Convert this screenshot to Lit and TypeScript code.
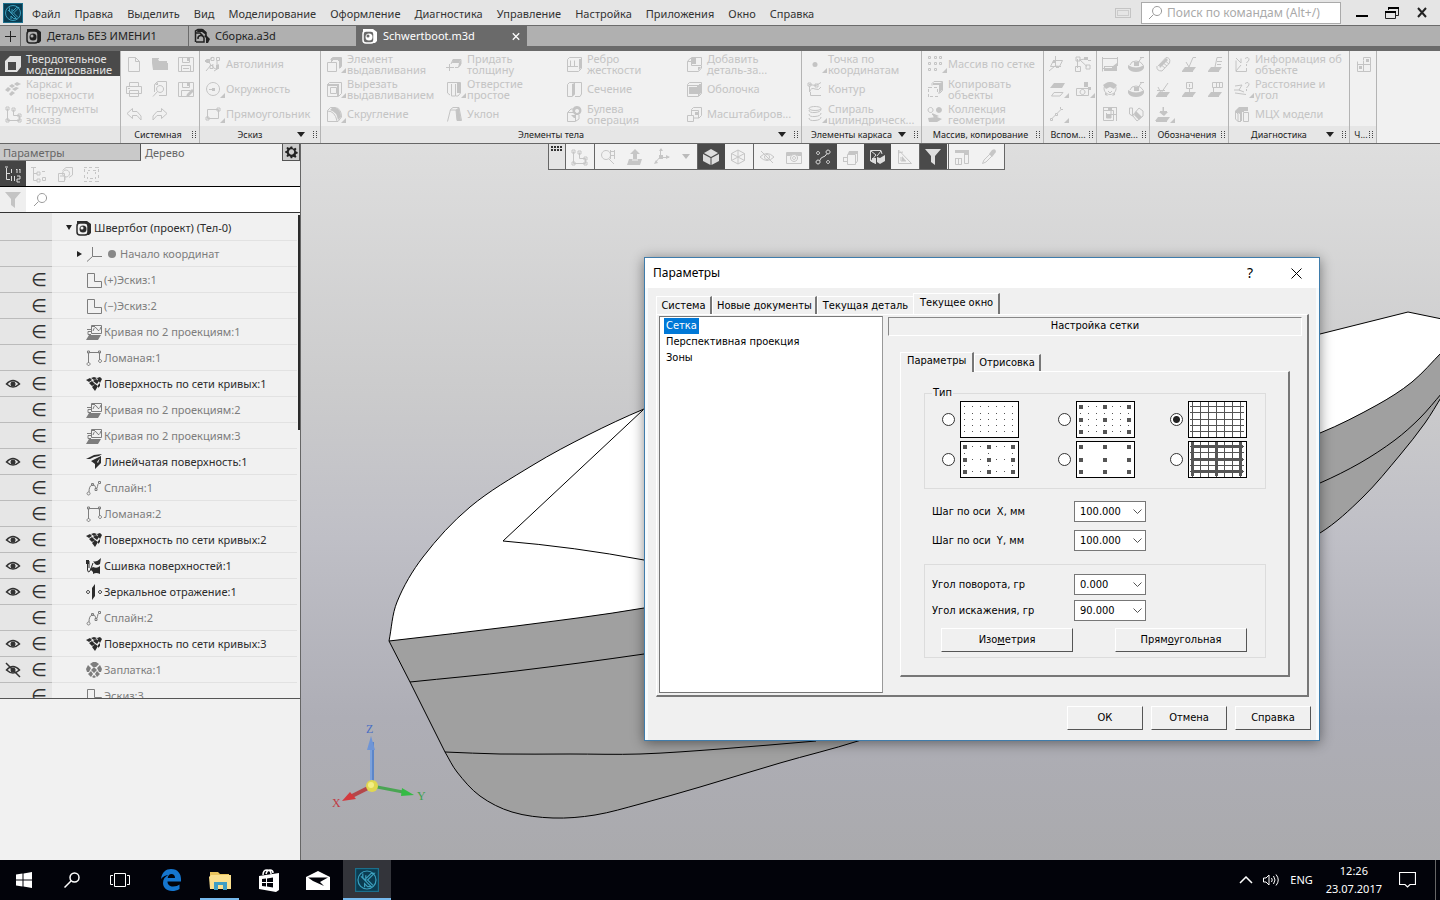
import { LitElement, html, svg, css, nothing } from "lit";
import { customElement, state } from "lit/decorators.js";
import { classMap } from "lit/directives/class-map.js";

/** Each glyph is [stroked path, filled path] on a 16 x 16 grid. */
const glyphs: Record<string, [string, string]> = {
  solid: ["", "M0 5L5 0H16V11L12 16H0ZM3 6V14H11V6Z"],
  surf: ["", "M4 5l3-2 3 2-3 2zM9 3l3-2 4 2-4 2zM0 9l3-3 3 2-3 3zM7 8l4-2 3 1-4 3zM4 13l3-3 3 2-4 3z"],
  sketchTools: ["M2.500 2.500V14.500H14.500V9.500H8.500V3.500M1 1h3v3H1zM1 13h3v3H1zM7 2h3v3H7zM13 8h3v3h-3zM13 13h3v3h-3z", ""],
  file: ["M2.500 1.500H9.500L13.500 5.500V15.500H2.500ZM9.500 1.500V5.500H13.500", ""],
  folder: ["M0 2.500H7", "M0 3h6l1 2h8v2H0zM0 7h16v7H1z"],
  save: ["M.5 1.500H15.500V15.500H.5ZM4.500 1.500V6.500H11.500V1.500M3.500 15.500V9.500H12.500V15.500M5 12.500h6", "M9 2h2v3H9z"],
  print: ["M3.500 5.500V1.500H12.500V5.500M.5 5.500H15.500V12.500H.5ZM3.500 9.500H12.500V15.500H3.500Z", "M2 7h2v1H2z"],
  preview: ["M2.500 11V3.500L5.500 .5H14.500V14.500H7M8 4.500a3.500 3.500 0 1 0 .1 0M5.500 10.500l-4.500 5", "M3 4l3-3v3z"],
  saveAs: ["M.5 1.500H15.500V15.500H.5ZM4.500 1.500V6.500H11.500V1.500M3.500 15.500V9.500H12.500", "M9 2h2v3H9zM8 16l1-3 5-5 2 2-5 5z"],
  undo: ["M6.500 2.500L1 7.500L6.500 12.500V9.500H11L15 14V10L11 5.500H6.500Z", ""],
  redo: ["M9.500 2.500L15 7.500L9.500 12.500V9.500H5L1 14V10L5 5.500H9.500Z", ""],
  autoline: ["M1 15L6 9L3 5L8 1M1.500 3.500h3v3h-3zM11.500 1.500h3v3h-3zM8 8a3 3 0 1 0 5 0M6 1.500h3v3H6zM5 9.500h3v3H5zM12 5v4M9 15l5-3", "M0 4h3v2H0zM11 9h3v4h-3z"],
  circle: ["M8 1.500a6.500 6.500 0 1 0 .1 0M4 8.500H9", "M7 7h3v3H7z"],
  rect: ["M2.500 3.500H13.500V12.500H2.500ZM12 2h3v3h-3zM1 11h3v3H1z", ""],
  extrude: ["M4.500 3.500L6.500 1.500H15.500V10.500L13.500 12.500M1.500 6.500H10.500V15.500H1.500ZM5.500 4V6", "M5 2h10v2H7v1H5zM12 4h3v8h-2V5h-1z"],
  cut: ["M1.500 3.500L3.500 1.500H15.500V12.500L12.500 15.500H1.500ZM4.500 6.500H10.500V12.500H4.500Z", "M1 3h12v12h-2V5H1z"],
  fillet: ["M1.500 15.500V4.500L4.500 1.500H9Q15.500 2.500 15.500 11L12 15.500H1.500M1.500 5Q9 5 11 15", "M6 2h4q5 2 5 9l-3 3Q11 6 4 4z"],
  thick: ["M0 11.500H8M3.500 8V15M5 8L7 3.500H15V8L12 11.500H9", "M7 3h8l-2 4H6zM13 7l2-3v5l-3 3z"],
  hole: ["M1.500 1.500H14.500V12L12 15H10M1.500 1.500V12L4 14M5.500 3V15H9.500V3", "M11 2h3v10h-3z"],
  draft: ["M1.500 15.500L4.500 3.500L7 1.500H13L15.500 14.500H11L10 4H4M10 4L13 2", "M10 4l3-2 2 12h-4z"],
  rib: ["M1.500 3.500L3.500 1.500H15.500V12.500L12.500 15.500H1.500ZM4.500 10.500V4.500M8.500 10.500V4.500M1.500 10.500H12", "M13 3h2v9l-2 2z"],
  section: ["M1.500 3.500L3.500 1.500H15.500V13L14 15.500H9M1.500 3.500V15.500H6L8.500 13V1.500M6.500 4V15", "M6 3l3-1v11l-3 3z"],
  bool: ["M1.500 6.500H9.500V15.500H1.500ZM2 6l3-3h2M10 15l3-2V9", "M11 0a4.500 4.500 0 1 1-.1 0zM11 3a2 2 0 1 0 .1 0zM5 9h5v3H8z"],
  addPart: ["M1.500 5.500H6M1.500 5.500V15.500H12.500L15.500 12V10M1.500 5.500L4 2.500H6M5.500 1.500H15.500V9.500H5.500Z", "M6 2h4v6H6zM12 11h3l-3 4z"],
  shell: ["M1.500 3.500L3.500 1.500H15.500V12.500L12.500 15.500H1.500ZM5.500 7.500H9.500V11.500H5.500Z", "M1 4h12v11h-1V13H3V6h8V5H1zM13 3h2v9l-2 2z"],
  scale: ["M1.500 9.500H7.500V15.500H1.500ZM5.500 9V3.500L7.500 1.500H15.500V9.500L13 12H8M5.500 4.500H12.500V12", "M9 6h3v3H9z"],
  point: ["", "M8 6a2.500 2.500 0 1 1 0 5a2.500 2.500 0 1 1 0-5z"],
  contour: ["M2 3.500L9 4.500L14 1.500M2.500 5V11Q4 6 8 8T14 6M3.500 11V14.500H14M1 2h3v3H1zM8 3h3v3H8z", ""],
  spiral: ["M8 .5a6 2 0 1 0 .1 0M2 4Q2 7 8 6.500T14 3M2 8Q2 11 8 10.500T14 7M2 12Q2 15 8 14.500T14 11", ""],
  array: ["M1.500 .5h2v2h-2zM7.500 .5h2v2h-2zM12.500 .5h2v2h-2zM1.500 6.500h2v2h-2zM7.500 6.500h2v2h-2zM12.500 6.500h2v2h-2zM1.500 12.500h2v2h-2zM7.500 12.500h2v2h-2z", ""],
  copy: ["M5 4.500V2.500L7 .5H15.500V9.500L13 12H11", "M6 2h7l2-1v8l-3 3V4H6zM1 6h4v1H1zM7 6h3v1H7zM1 8h1v3H1zM10 8h1v3h-1zM1 13h1v3H1zM3 15h3v1H3zM8 15h3v1H8z"],
  collect: ["M3.500 1.500a2.500 2.500 0 1 0 .1 0M5 8L8 11L4 14", "M12 1a3 3 0 1 1-.1 0zM5 7l7 3-5 2zM1 12l9-1 5 2-5 3H2z"],
  plane: ["M4.500 4.500H13.500L10.500 10.500H1.500ZM6.500 0V10M0 15L6 10L12 10.500", "M4 4h3v3H4zM7 10h3v2H7z"],
  csys: ["M5 4L12 10.500M2.500 3V12M.5 10.500H5.500V15.500H.5ZM4 4L10 3M1 1h4v4H1zM11 9h4v4h-4z", "M9 1h4v3H9zM13 4h3v1h-3z"],
  planes2: ["M2.500 15L5 11.500H14L11 15Z", "M1 7l4-5h11l-3 5z"],
  cam: ["M1.500 7.500H13.500V14.500H1.500ZM7.500 8.500a2.500 2.500 0 1 0 .1 0", "M9 1h4v5H9zM13 6h3v3h-3z"],
  line2: ["M1.500 12.500h2v2h-2zM6.500 7.500h2v2h-2zM3.500 12l3-3M8.500 7l3-3M11.500 3.500V1M12 3.500h2", ""],
  dim1: ["M.5 1V15.500M15.500 1V10M1 2.500H15M1 12.500H15", "M2 10h9l4-3v8H2zM3 11v1h7v-1z"],
  dimR: ["M2 9Q3 5 8 5T15 9M9 8L14 1M12 1.500H16", "M0 9q8 5 16 0v3q-2 4-8 4T0 12zM6 6h5v4H6z"],
  face: ["M8 1.500a6 6 0 1 0 .1 0M3 5h10M6 10l2 2 2-2", "M1 4q7-6 14 0l-3 4-4-2-4 2zM3 11l3 4-3-1zM13 11l-3 4 3-1z"],
  dim2: ["M1.500 1V14.500H11.500V4.500H1M4.500 8.500H15M4.500 7V12H9V5M14.500 1V15M1 1.500H14", "M5 9h4v3H5zM6 2h4v2H6z"],
  tag: ["M1.500 2L4.500 2L4.500 10L1.500 8ZM5 9L11 2L15 5V10L9 15L5 10Z", "M8 5l6 6-3 3-5-5z"],
  thread: ["M3 10L11 1.500Q16 1.500 14.500 7L7 15Q1 15 2 10M5 8l5 4M7 6l5 4M9 4l5 4", "M4 9l7-7 2 2-8 8z"],
  rough: ["M5 6L8 11L12 1.500H15M1 15.500H12", "M4 11h11l-3 4H1z"],
  base: ["M8 11L10 1.500H15M10 5.500h5M10 8.500h4M1 15.500H12", "M4 11h11l-3 4H1z"],
  leader: ["M3 6L6 12L13 2M2 9.500H10M1 15.500H12", "M4 11h11l-3 4H1z"],
  datum: ["M5.500 1.500H11.500V7.500H5.500ZM8.500 8V11M1 15.500H12", "M4 11h11l-3 4H1zM8 3h1v3H8z"],
  tol: ["M5.500 1.500H15.500V6.500H5.500ZM9.500 2V6M12.500 2V6M6.500 7V12M1 15.500H12", "M4 11h11l-3 4H1z"],
  weld: ["M8.500 1V9M8 1L8 9M1 15.500H12M5 5.500h7", "M4 6h9l-4 4zM3 11h12l-3 4H0z"],
  info: ["M2 2L7 7V2.500M2 4.500V15.500H12.500V12M11 2.500Q15 0 15 4L12.500 7M12.500 8v2M7 9l-5 6", ""],
  distance: ["M1 5L8 4L5 9L10 11M1 12L12 13.500M11 2.500Q15 0 15 4L12.500 7M12.500 8v2M0 9h6", ""],
  mass: ["M1.500 5.500V13L4 15.500V8ZM4 15.500H7M9.500 6.500H14.500V15.500H9.500Z", "M1 5l4-4h9v4h-4v1H8V15H6V8L1 6z"],
  more: ["M2.500 5.500V15.500H15.500V8.500H2M8.500 5V15M8.500 4.500V1.500H15.500V11", "M4 10h3v3H4zM11 3h3v3h-3z"],
  zoomArea: ["M6 1.500a4.500 4.500 0 1 0 .1 0M9 10l5 5M10 2.500h5M11 6.500h4M10.500 1v9M14.500 1v9", ""],
  orient: ["M8 1V10M5 11H11", "M8 0l5 5h-3v5H6V5H3zM2 10h3v2h6v-2h4l-2 6H0z"],
  axes: ["M6.500 7V0M6.500 8.500H15M6 8L1 14", "M5 6h4v4H5zM12 6l4 2-4 2zM0 15l2-4 2 3zM5 2l2-3 2 3z"],
  cube: ["", "M8 0L15 4L8 8L1 4ZM0 5L7.500 9V16L0 12ZM8.500 9L16 5V12L8.500 16Z"],
  wire: ["M8 1L14.500 4.500V11.500L8 15L1.500 11.500V4.500ZM1.500 4.500L8 8L14.500 4.500M8 8V15M8 1V8L1.500 11.500M8 8L14.500 11.500", ""],
  eyeOff: ["M1 8Q8 1 15 8Q8 15 1 8ZM2 2L14 14M8 5.500a2.500 2.500 0 1 0 .1 0", ""],
  camera: ["M.5 3.500H15.500V14.500H.5ZM8 5.500a3.500 3.500 0 1 0 .1 0M8 7.500a1.500 1.500 0 1 0 .1 0", "M1 4h14v3h-3L8 5 4 7H1z"],
  spline4: ["M3 2.500a1.500 1.500 0 1 0 .1 0M3 11a2 2 0 1 0 .1 0M13 1a2 2 0 1 0 .1 0M13 11.500a1.500 1.500 0 1 0 .1 0M4.500 12Q6 8 8 8T12 4.500", ""],
  boxes: ["M5.500 5.500H13.500V15.500H5.500ZM6 5L8 2.500H15.500V12L14 14M1 8.500H5M1 12.500H5M1.500 8v5", "M7 2h9v3H6z"],
  display: ["M1.500 1.500H12L13 5M1.500 1.500V12L7 14.500M2 2l5 4-5 6M8 7l4-5", "M8 8l3 1 5-3v6l-5 3-3-2zM3 9h4v6l-4-2z"],
  triang: ["M2.500 1V14.500H15.500ZM2 4l5-1M5 8v4h5", "M6 7l4 5H6z"],
  filter: ["", "M0 0H16L10 7V16L6 13V7Z"],
  caliper: ["M1.500 2.500H14.500M10.500 2V14.500H14.500V2M1 9.500H7M1.500 9V15.500H7.500V9M4.500 9v6", "M1 1h14v3H1zM10 4h4v2h-4z"],
  dropper: ["M1.500 14.500L3 11L9 5L11 7L5 13Z", "M8 5l3-4q4-2 4 2l-4 5z"],
  treeNum: ["M1.500 2V13.500H5M1.500 7.500H5M0 1h3M6.500 3V7M6.500 10v5M9.500 10v5M11 4l1-1v4M14 4l1-1v4M12 10h3v3h-3v3h3", ""],
  tree: ["M2.500 1V14.500H6M3 7.500H6M6 6h3v3H6zM6 13h3v3H6zM11 5.500h3M11.500 11.500h3v3h-3zM0 1.500h5", ""],
  asmCopy: ["M5.500 4.500L9 1.500H15.500V9L12 11.500M1.500 7.500H7.500V15.500H1.500ZM9 4a3.500 3.500 0 1 0 .1 0M3 10h5v4", ""],
  dashed: ["M1 1.500h3M6 1.500h3M12 1.500h4M1 15.500h3M6 15.500h3M12 15.500h4M1.500 3v3M1.500 9v3M15.500 3v3M15.500 9v3M5 4.500h2M10 4.500h3M4.500 6v2M4.500 11v2M12.500 6v2M12.500 11v2M7 12.500h3", ""],
  searchL: ["M10 1.500a4.500 4.500 0 1 0 .1 0M6.500 9.500L2 14", ""],
  origin: ["M6.500 1V10.500H16M6.500 10.500L1 15.500", ""],
  sketch: ["M1.500 1.500H8.500V9.500H15.500V15.500H1.500Z", ""],
  curve2: ["M5.500 1.500H15.500V9.500H5.500ZM7 7q2-6 4-2t4-2M1 5.500h4M5 7.500H2v3h3M3 12H13", "M3 11h12l-3 5H0zM6 1h3v2H6z"],
  poly: ["M2.500 3V13M2.500 2.500H13.500V10M1.500 1h2v2h-2zM12.500 1h2v2h-2zM2.500 12.500a1.500 1.500 0 1 0 .1 0M14 9.500a1.500 1.500 0 1 0 .1 0", ""],
  mesh: ["", "M0 4l4-2 2 2-3 2zM5 2l3-1 3 1-3 2zM7 5l3-2 3 2-2 3zM11 2l3-1 2 2-2 4-2-3zM3 7l3-2 3 3-3 2zM6 11l3-3 3 2-3 5zM12 9l2-2v3l-2 2z"],
  ruled: ["", "M0 5L8 1L16 0L13 2L8 3L4 5ZM5 7L15 2V9L9 15V10ZM11 8l3-4-2 5z"],
  spline: ["M2.500 12a1.500 1.500 0 1 0 .1 0M3 12Q3 6 6 5T10 8Q11 10 12 4M5.500 3.500h2v2h-2zM9 8.500h2v2H9zM12.500 1.500h2v2h-2z", ""],
  sew: ["M1.500 2.500V12Q2 15.500 4 13L7 5M3 3V10", "M0 2h3v4H0zM7 3q3 2 8-3l-1 6q-3 2-5 0zM7 9q4 2 7-1v8q-4-2-7 0zM4 11l3-2v5z"],
  mirror: ["M2 6.500a1.500 1.500 0 1 0 .1 0M14 6.500a1.500 1.500 0 1 0 .1 0", "M6 4L9 0V12L6 16Z"],
  patch: ["", "M4 2l3-2h3l3 2-3 3H7zM0 7l2-4 3 3-2 4H1zM16 7l-2-4-3 3 2 4h2zM5 8l3-3 3 3-3 3zM2 12l3-3 2 3-2 3zM14 12l-3-3-2 3 2 3zM6 15l2-2 2 2-2 1z"],
  gear: ["", "M7 1h2l.5 2 1.500.700 2-1.200 1.500 1.500-1.200 2 .700 1.500 2 .500v2l-2 .500-.700 1.500 1.200 2-1.500 1.500-2-1.200L9.500 14 9 16H7l-.5-2L5 13.300l-2 1.200L1.500 13l1.200-2L2 9.500 0 9V7l2-.5L2.700 5 1.500 3 3 1.500l2 1.200L6.500 2zM8 4.500a3.500 3.500 0 1 0 .1 0z"],
};

const icon = (name: string, corner = false) => {
  const [line, area] = glyphs[name];
  return html`<svg class="ic" viewBox="0 -1 20 18" aria-hidden="true">
    ${line ? svg`<path d=${line} fill="none" stroke="currentColor" />` : nothing}
    ${area ? svg`<path d=${area} fill="currentColor" fill-rule="evenodd" />` : nothing}
    ${corner ? svg`<path d="M20 12V17H15Z" fill="currentColor" />` : nothing}
  </svg>`;
};

const partIcon = html`<svg class="part" viewBox="0 0 16 16" aria-hidden="true">
  <path d="M1 1H11L15 4V13L13 15H4L1 12Z" fill="currentColor" />
  <rect class="part-in" x="1" y="3" width="11" height="12" rx="3" stroke="currentColor" stroke-width="1.500" />
  <circle cx="7" cy="9" r="3.500" fill="currentColor" /><circle class="part-in" cx="6" cy="8" r="1.500" />
</svg>`;
const asmIcon = html`<svg class="part" viewBox="0 0 16 16" aria-hidden="true">
  <path d="M1.500 14V3L4 1.500H8L12 4.500V8M1.500 5H6L9 8M2 14H7M4 11a3 3 0 0 1 6-1V14H6" fill="none" stroke="currentColor" stroke-width="1.500" />
  <path d="M10 8L12 7L16 11L14 15H12V10ZM4 1h5l3 3v3L8 4H3z" fill="currentColor" />
</svg>`;
const logo = html`<svg class="logo" viewBox="0 0 20 20" aria-hidden="true">
  <rect class="logo-bg" x=".5" y=".5" width="19" height="19" />
  <g class="logo-line"><circle cx="10" cy="10" r="7.500" /><path d="M6.500 4.500V8L9 10.500V6M5 7L13.500 15.500H10.500L8 13V16M9.500 8.500L13.500 4.500H16L10.500 10L15 14.500" /></g>
</svg>`;
const grip = html`<svg class="grip" viewBox="0 0 4 8" aria-hidden="true"><path d="M0 .5H4M0 2.500H4M0 4.500H4M0 6.500H4" stroke="#444" stroke-dasharray="1 2" /></svg>`;

type Tool = { icon: string; text?: string; more?: boolean; on?: boolean };
type Group = { name: string; size: string; menu?: boolean; wide: boolean; tools: (Tool | null)[] };
const t = (icon: string, text?: string, more = false): Tool => ({ icon, text, more });

const groups: Group[] = [
  { name: "", size: "g-modes", wide: true, tools: [{ icon: "solid", text: "Твердотельное\nмоделирование", on: true }, t("surf", "Каркас и\nповерхности"), t("sketchTools", "Инструменты\nэскиза")] },
  { name: "Системная", size: "g-sys", wide: false, tools: [t("file"), t("print"), t("undo"), t("folder"), t("preview"), t("redo"), t("save"), t("saveAs")] },
  { name: "Эскиз", size: "g-sketch", menu: true, wide: true, tools: [t("autoline", "Автолиния"), t("circle", "Окружность", true), t("rect", "Прямоугольник", true)] },
  { name: "Элементы тела", size: "g-body", menu: true, wide: true, tools: [
    t("extrude", "Элемент\nвыдавливания", true), t("cut", "Вырезать\nвыдавливанием", true), t("fillet", "Скругление", true),
    t("thick", "Придать\nтолщину"), t("hole", "Отверстие\nпростое", true), t("draft", "Уклон"),
    t("rib", "Ребро\nжесткости"), t("section", "Сечение"), t("bool", "Булева\nоперация"),
    t("addPart", "Добавить\nдеталь-за..."), t("shell", "Оболочка"), t("scale", "Масштабиров...")] },
  { name: "Элементы каркаса", size: "g-frame", menu: true, wide: true, tools: [t("point", "Точка по\nкоординатам", true), t("contour", "Контур"), t("spiral", "Спираль\nцилиндрическ...", true)] },
  { name: "Массив, копирование", size: "g-array", wide: true, tools: [t("array", "Массив по сетке", true), t("copy", "Копировать\nобъекты"), t("collect", "Коллекция\nгеометрии")] },
  { name: "Вспом...", size: "g-two", wide: false, tools: [t("plane"), t("planes2", undefined, true), t("line2", undefined, true), t("csys"), t("cam", undefined, true)] },
  { name: "Разме...", size: "g-two", wide: false, tools: [t("dim1"), t("face"), t("dim2"), t("dimR"), t("dimR"), t("tag")] },
  { name: "Обозначения", size: "g-sys", wide: false, tools: [t("thread"), t("leader"), t("weld", undefined, true), t("rough"), t("datum"), null, t("base"), t("tol")] },
  { name: "Диагностика", size: "g-sketch", menu: true, wide: true, tools: [t("info", "Информация об\nобъекте"), t("distance", "Расстояние и\nугол", true), t("mass", "МЦХ модели")] },
  { name: "Ч...", size: "g-one", wide: false, tools: [t("more")] },
];

type Node = { icon: string; name: string; eye?: "on" | "off"; mark?: string };
const nodes: Node[] = [
  { icon: "sketch", name: "Эскиз:1", mark: "(+)" },
  { icon: "sketch", name: "Эскиз:2", mark: "(−)" },
  { icon: "curve2", name: "Кривая по 2 проекциям:1" },
  { icon: "poly", name: "Ломаная:1" },
  { icon: "mesh", name: "Поверхность по сети кривых:1", eye: "on" },
  { icon: "curve2", name: "Кривая по 2 проекциям:2" },
  { icon: "curve2", name: "Кривая по 2 проекциям:3" },
  { icon: "ruled", name: "Линейчатая поверхность:1", eye: "on" },
  { icon: "spline", name: "Сплайн:1" },
  { icon: "poly", name: "Ломаная:2" },
  { icon: "mesh", name: "Поверхность по сети кривых:2", eye: "on" },
  { icon: "sew", name: "Сшивка поверхностей:1", eye: "on" },
  { icon: "mirror", name: "Зеркальное отражение:1", eye: "on" },
  { icon: "spline", name: "Сплайн:2" },
  { icon: "mesh", name: "Поверхность по сети кривых:3", eye: "on" },
  { icon: "patch", name: "Заплатка:1", eye: "off" },
  { icon: "sketch", name: "Эскиз:3" },
];

const eye = (kind: "on" | "off") => html`<svg class="eye" viewBox="0 0 16 16" aria-hidden="true">
  <path d="M1.500 8Q8 1 14.500 8Q8 14 1.500 8Z" fill="none" stroke="currentColor" stroke-width="1.500" />
  <circle cx="8" cy="8" r="2.500" fill="currentColor" />
  ${kind === "off" ? svg`<path d="M1 1L15 15" stroke="currentColor" stroke-width="1.500" />` : nothing}
</svg>`;

/** Smooth open curve through the points; handles are a third of each segment's length. */
type P = [number, number];
const curve = (pts: P[], start = "M") => {
  const tangent = (i: number): P => {
    const a = pts[Math.max(i - 1, 0)], b = pts[Math.min(i + 1, pts.length - 1)];
    const n = Math.hypot(b[0] - a[0], b[1] - a[1]);
    return [(b[0] - a[0]) / n, (b[1] - a[1]) / n];
  };
  let d = `${start}${pts[0]}`;
  for (let i = 0; i < pts.length - 1; i++) {
    const b = pts[i], c = pts[i + 1], u = tangent(i), v = tangent(i + 1);
    const h = Math.hypot(c[0] - b[0], c[1] - b[1]) / 3;
    d += `C${b[0] + u[0] * h},${b[1] + u[1] * h} ${c[0] - v[0] * h},${c[1] - v[1] * h} ${c}`;
  }
  return d;
};
const deckEdge: P[] = [[389, 641], [397, 602], [423, 557], [470, 507], [533, 465], [588, 435], [644, 409], [700, 388]];
const sheer: P[] = [[389, 641], [516, 626], [644, 608], [900, 560], [1150, 497], [1320, 433], [1377, 405], [1412, 382], [1442, 352]];
const keel: P[] = [[445, 752], [457, 772], [480, 796], [512, 812], [553, 818], [595, 815], [640, 804], [700, 787], [780, 763], [858, 741], [1100, 660], [1320, 533], [1363, 497], [1400, 455], [1425, 423], [1442, 396]];
const chine: P[] = [[410, 682], [516, 671], [644, 654], [900, 615], [1150, 555], [1320, 483], [1360, 463], [1395, 440], [1420, 418], [1442, 393]];
const lowChine: P[] = [[445, 752], [500, 754], [570, 754], [640, 754], [720, 749], [816, 741]];
const rev = (p: P[]) => [...p].reverse();
const stern = "L1320,334L1408,312L1442,319";

const scene = html`<svg class="scene" viewBox="301 144 1139 716" preserveAspectRatio="xMinYMin slice" aria-hidden="true">
  <path class="deck" d=${curve(deckEdge) + stern + curve(rev(sheer), "L")} />
  <path class="hull" d=${curve(sheer) + curve(rev(keel), "L") + "L410,682Z"} />
  <g class="edges">
    <path d=${curve(deckEdge) + stern} /><path d=${curve(sheer)} />
    <path d=${"M389,641L410,682L445,752" + curve(keel, "L")} />
    <path d=${curve(chine)} /><path d=${curve(lowChine)} />
    <path d="M643,410L503,541Q575,547 644,560" />
  </g>
  <path d="M372 786V742" stroke="#5c86c9" stroke-width="4" /><path d="M371 786V742" stroke="#9dbdec" />
  <path d="M371 736L375 750H367Z" fill="#6f95d6" />
  <path d="M372 786L350 797" stroke="#b3474b" stroke-width="4" /><path d="M342 801L350 792L356 799Z" fill="#d3393d" />
  <path d="M372 786L403 792" stroke="#4aa553" stroke-width="3" /><path d="M414 795L402 788L401 796Z" fill="#35bb45" />
  <circle cx="372" cy="786" r="6" fill="#e0d750" /><circle cx="371" cy="785" r="3" fill="#f2ee85" />
  <text class="ax" x="366" y="733" fill="#4b6fc4">Z</text><text class="ax" x="332" y="807" fill="#c03a44">X</text><text class="ax" x="417" y="800" fill="#3da24a">Y</text>
</svg>`;

const xs = [4, 12, 20, 28, 36, 44, 52];
const ys = [5, 12, 18, 24, 30];
const dots = (keep: (i: number, j: number) => boolean) =>
  xs.flatMap((x, i) => ys.map((y, j) => (keep(i, j) ? svg`<rect x=${x} y=${y} width="1" height="1" />` : nothing)));
const blocks = [3, 27, 51].flatMap((x) => [4, 17, 29].map((y) => svg`<rect x=${x} y=${y} width="4" height="4" />`));
const gridPath = "M4.500 1V36M12.500 1V36M20.500 1V36M28.500 1V36M36.500 1V36M44.500 1V36M52.500 1V36M2 5.500H56M2 11.500H56M2 18.500H56M2 24.500H56M2 30.500H56";
const samples = [
  { id: "points", label: "Точки", art: dots(() => true) },
  { id: "points-nodes", label: "Точки с узлами", art: [dots(() => true), blocks] },
  { id: "lines", label: "Линии", art: svg`<path d=${gridPath} />` },
  { id: "sparse-nodes", label: "Редкие точки с узлами", art: [dots((i, j) => i % 3 === 0 || j % 2 === 0), blocks] },
  { id: "nodes", label: "Узлы", art: blocks },
  { id: "bold-lines", label: "Линии с утолщением", art: svg`<path d=${gridPath} /><path stroke-width="3" d="M4.500 1V35M28.500 1V35M52.500 1V35M3 5.500H55M3 18.500H55M3 30.500H55" />` },
];

@customElement("app-root")
export class AppRoot extends LitElement {
  @state() private sample = "lines";

  static styles = css`
    * { box-sizing: border-box; }
    :host { display: flex; flex-direction: column; height: 100vh; overflow: hidden; background: #f1f1f1; color: #333; font: 11px/16px "Noto Sans", "Open Sans", sans-serif; }
    button, input, select { font: inherit; color: inherit; margin: 0; padding: 0; border: 0; background: none; border-radius: 0; }
    a { color: inherit; text-decoration: none; }
    svg { display: block; flex: none; }
    .ic { width: 20px; height: 18px; overflow: visible; }
    .part { width: 16px; height: 16px; }
    .part-in { fill: #b0b0b0; }
    .logo { width: 20px; height: 20px; }
    .logo-bg { fill: #0b3c51; stroke: #1c6f8c; }
    .logo-line { fill: none; stroke: #3c9fbd; stroke-width: 1; }

    .menubar { display: flex; align-items: center; height: 26px; flex: none; padding-left: 3px; background: #e5e5e5; border-bottom: 1px solid #6b6b6b; }
    .menu { display: flex; gap: 14px; margin-left: 9px; padding-top: 2px; flex: 1; }
    .find { display: flex; align-items: center; width: 200px; height: 22px; border: 1px solid #aaa; background: #fff; color: #999; margin: 0 14px 0 10px; padding-left: 5px; font-size: 12px; }
    .find input { flex: 1; min-width: 0; outline: 0; }
    .find input::placeholder { color: #aaa; opacity: 1; }
    .frame { width: 16px; height: 10px; border: 1px solid #c4c4c4; box-shadow: inset 0 0 0 1px #e5e5e5, inset 0 0 0 2px #ccc; }
    .winbtns { display: flex; gap: 16px; padding-right: 11px; color: #222; }

    .docs { display: flex; height: 25px; flex: none; background: #b0b0b0; border-bottom: 5px solid #6a6a6a; color: #222; }
    .plus { width: 21px; border-right: 1px solid #6b6b6b; display: grid; place-items: center; }
    .doc { display: flex; align-items: center; gap: 5px; padding-left: 5px; width: 168px; border-right: 1px solid #6b6b6b; text-align: left; }
    .doc.on { width: 170px; background: #6a6a6a; color: #fff; padding-right: 3px; }
    .doc.on .part-in { fill: #6a6a6a; }
    .doc .x { margin-left: auto; width: 14px; }

    .ribbon { display: flex; flex: none; border-bottom: 1px solid #666; color: #c4c4c4; }
    .group { display: flex; flex-direction: column; border-right: 1px solid #b4b4b4; flex: none; }
    .g-modes { width: 121px; } .g-sys { width: 79px; } .g-sketch { width: 121px; } .g-body { width: 481px; } .g-frame { width: 120px; } .g-array { width: 122px; } .g-two { width: 53px; } .g-one { width: 27px; }
    .tools { display: grid; grid-template-rows: repeat(3, 25px); grid-auto-flow: column; grid-auto-columns: 26px; height: 75px; }
    .tools.wide { grid-auto-columns: 120px; }
    .tool { display: flex; align-items: center; gap: 1px; padding-left: 5px; text-align: left; line-height: 11px; white-space: pre; }
    .tool.on { background: #4a4a4a; color: #e2e2e2; }
    .cap { display: flex; align-items: center; height: 17px; background: #e6e6e6; color: #222; font-size: 9px; padding: 0 3px; white-space: nowrap; }
    .cap span { flex: 1; text-align: center; }
    .cap .tri { width: 8px; height: 5px; margin-right: 8px; fill: #222; }
    .grip { width: 4px; height: 8px; }

    .work { display: flex; flex: 1; min-height: 0; }
    .side { width: 301px; flex: none; display: flex; flex-direction: column; border-right: 1px solid #666; }
    .stabs { display: flex; height: 17px; color: #666; flex: none; }
    .stab { width: 141px; text-align: left; padding-left: 3px; background: #c9c9c9; border-right: 1px solid #555; border-bottom: 1px solid #777; line-height: 15px; }
    .stab.on { background: none; border: 0; padding-left: 4px; }
    .gearbtn { width: 18px; border: 1px solid #555; border-top: 0; margin-left: auto; background: #ccc; color: #222; display: flex; align-items: center; padding-left: 2px; }
    .gearbtn .ic { width: 16px; height: 14px; }
    .sbar { display: flex; height: 26px; flex: none; color: #c6c6c6; border-bottom: 1px solid #000; }
    .sq { width: 26px; display: flex; align-items: center; padding-left: 5px; }
    .sq.on { background: #444; color: #ddd; }
    .sfind { display: flex; height: 26px; flex: none; background: #fff; border-bottom: 1px solid #333; color: #999; }
    .sfind .sq { background: #efefef; color: #c4c4c4; }
    .sfind label { display: flex; align-items: center; padding-left: 6px; flex: 1; }
    .sfind input { flex: 1; outline: 0; }
    .tree { height: 486px; flex: 0 1 auto; overflow: hidden; padding-top: 2px; border-bottom: 1px solid #555; background: linear-gradient(#2b2b2b, #2b2b2b) 298px 2px / 3px 215px no-repeat, linear-gradient(90deg, #e6e6e6 52px, transparent 52px); margin: 0; list-style: none; padding-left: 0; }
    .row { display: flex; height: 26px; align-items: center; width: 297px; color: #7d7d7d; }
    .row.live { color: #2c2c2c; }
    .gut { display: grid; grid-template-columns: 26px 26px; align-self: stretch; align-items: center; justify-items: center; width: 52px; flex: none; border-bottom: 1px solid #bbb; color: #333; }
    .inc { grid-column: 2; font: 18px/18px "DejaVu Sans", sans-serif; }
    .eye { width: 16px; height: 16px; grid-row: 1; grid-column: 1; }
    .cell { display: flex; align-items: center; align-self: stretch; flex: 1; border-bottom: 1px solid #e2e2e2; padding-left: 34px; white-space: nowrap; }
    .cell.root { padding-left: 12px; gap: 2px; }
    .cell.sub { padding-left: 22px; gap: 2px; }
    .cell .ic { margin-right: -2px; }
    .cell .arr { width: 10px; display: grid; place-items: center; }
    .cell .arr svg { fill: #222; }
    .tree .part-in { fill: #f1f1f1; }
    .ball { width: 8px; height: 8px; border-radius: 50%; background: #888; margin: 0 2px; }

    .view { position: relative; flex: 1; min-width: 0; background: linear-gradient(#dedede, #cbcbcc 35%, #bfbfc6 55%, #aeaeb6 80%, #aaaaad); overflow: hidden; }
    .scene { width: 100%; height: 100%; }
    .deck { fill: #fff; } .hull { fill: #a0a0a0; }
    .edges { fill: none; stroke: #000; stroke-width: 1; }
    .ax { font: 12px "Liberation Serif", serif; }
    .float { position: absolute; left: 247px; top: 0; display: flex; height: 26px; border: 1px solid #666; border-top: 0; background: #f2f2f2; color: #c6c6c6; }
    .float .handle { width: 16px; padding: 2px 2px; background: #e4e4e4; }
    .set { display: flex; border-left: 1px solid #666; padding-right: 1px; }
    .set .sq { width: 27px; }
    .set .sq.on { background: #4a4a4a; color: #ddd; }
    .set .drop { width: 20px; display: grid; place-items: center; }
    .set .drop svg { fill: #bbb; }

    .dlg { position: absolute; left: 343px; top: 113px; width: 676px; background: #f0f0f0; border: 1px solid #3f7cab; box-shadow: 0 2px 12px rgba(0, 0, 0, 0.450); color: #000; font: 11px/16px "DejaVu Sans Condensed", "DejaVu Sans", sans-serif; font-stretch: condensed; }
    .title { display: flex; align-items: center; height: 30px; background: #fff; padding: 0 14px 0 8px; font: 12px/16px "Noto Sans", sans-serif; }
    .title b { flex: 1; font-weight: 400; }
    .title button { width: 18px; margin-left: 28px; font-size: 14px; }
    .title svg { margin: auto; }
    .body { padding: 5px 10px 10px 11px; box-shadow: inset 3px 0 #f7fbfd, inset -3px 0 #f7fbfd; }
    .tabs { display: flex; align-items: flex-end; height: 21px; }
    .tab { height: 18px; padding: 0 4px; border-right: 2px solid #777; border-top: 1px solid #fff; border-left: 1px solid #fff; text-align: center; background: #f0f0f0; white-space: nowrap; }
    .tab.on { height: 21px; padding: 0 6px 3px; position: relative; z-index: 1; }
    .t1 { width: 56px; } .t2 { width: 105px; } .t3 { width: 96px; border-right: 0; } .t4 { width: 87px; }
    .page { border: 1px solid #fff; border-right: 2px solid #777; border-bottom: 2px solid #777; }
    .outer { display: grid; grid-template-columns: 224px 1fr; column-gap: 5px; padding: 1px 5px 2px 2px; height: 383px; }
    .list { border: 1px solid #777; border-right-color: #999; background: #fff; padding: 1px 5px; margin: 0; list-style: none; }
    .list li { height: 16px; line-height: 16px; }
    .list span { display: inline-block; padding: 0 2px; margin-left: -1px; }
    .list .sel { background: #0078d7; color: #fff; }
    .head { height: 19px; border: 1px solid #888; border-right-color: #fff; border-bottom-color: #fff; text-align: center; line-height: 16px; margin-top: 1px; }
    .inner { margin: 16px 12px 0; }
    .inner .tabs { height: 19px; }
    .inner .tab { height: 17px; }
    .inner .tab.on { height: 20px; margin-bottom: -1px; }
    .inner .page { padding: 13px 22px 17px 23px; height: 306px; }
    fieldset { margin: 0; padding: 0; border: 1px solid #dcdcdc; min-width: 0; }
    .kinds { height: 104px; padding: 0 0 0 17px; }
    .kinds legend { margin-left: -10px; padding: 0 1px; line-height: 16px; }
    .kgrid { display: grid; grid-template-columns: 116px 112px 80px; row-gap: 3px; }
    .kind { display: flex; align-items: center; gap: 5px; height: 37px; }
    .kind input { appearance: none; width: 13px; height: 13px; border: 1px solid #333; border-radius: 50%; background: #fff; flex: none; }
    .kind input:checked { background: radial-gradient(circle, #222 0 3px, #fff 4px); }
    .kind svg { width: 59px; height: 37px; background: #fff; border: 1px solid #000; fill: #555; }
    .kind path { fill: none; stroke: #555; }
    .line { display: grid; grid-template-columns: 142px 72px; align-items: center; height: 21px; }
    .steps { display: grid; row-gap: 8px; padding: 12px 0 13px 8px; }
    .angles { padding: 9px 18px 6px 16px; height: 94px; display: flex; flex-direction: column; }
    .angles .line { margin-left: -9px; margin-bottom: 5px; }
    .combo { display: grid; align-items: center; }
    .combo select { grid-area: 1 / 1; appearance: none; width: 100%; height: 21px; border: 1px solid #777; background: #fff; padding-left: 5px; }
    .combo svg { grid-area: 1 / 1; justify-self: end; margin-right: 4px; fill: none; stroke: #555; pointer-events: none; }
    .btn { height: 24px; background: #f0f0f0; border: 1px solid #fff; border-right-color: #555; border-bottom-color: #555; text-align: center; }
    .pair { display: flex; justify-content: space-between; margin-top: 2px; }
    .pair .btn { width: 132px; }
    .foot { display: flex; justify-content: flex-end; gap: 8px; margin: 9px -2px 0 0; }
    .foot .btn { width: 76px; }

    .task { display: flex; height: 40px; flex: none; background: #02030a; color: #fff; align-items: stretch; padding-right: 4px; }
    .task button { display: grid; place-items: center; }
    .sys { display: grid; grid-template-columns: repeat(3, 48px); margin-right: 2px; }
    .apps { display: grid; grid-template-columns: repeat(5, 49px); }
    .task .open { border-bottom: 2px solid #76b9ed; border-top: 2px solid transparent; margin: 0 5px; }
    .task .cur { margin: 0 0 0 1px; background: #33343a; }
    .task .logo { width: 24px; height: 24px; }
    .tray { margin-left: auto; display: flex; align-items: center; gap: 10px; }
    .clock { text-align: center; line-height: 18px; margin-left: 3px; }
    .tray .note { margin: 0 19px 0 7px; }
    .task .edge-end { width: 1px; background: #666; }
  `;

  private tool(x: Tool | null) {
    if (!x) return html`<span></span>`;
    return html`<button class=${classMap({ tool: true, on: !!x.on })} aria-label=${x.text ?? x.icon}>${icon(x.icon, x.more)}${x.text ? html`<span>${x.text}</span>` : nothing}</button>`;
  }

  private combo(id: string, label: string, value: string) {
    return html`<div class="line"><label for=${id}>${label}</label>
      <span class="combo"><select id=${id}><option>${value}</option></select>
      <svg width="9" height="6" viewBox="0 0 9 6" aria-hidden="true"><path d="M.5 .5L4.500 4.500L8.500 .5" /></svg></span></div>`;
  }

  private sq(name: string, on = false) {
    return html`<button class=${classMap({ sq: true, on })} aria-label=${name}>${icon(name)}</button>`;
  }

  private dialog() {
    return html`<section class="dlg" role="dialog" aria-label="Параметры">
      <div class="title"><b>Параметры</b><button aria-label="Помощь">?</button>
        <button aria-label="Закрыть"><svg width="11" height="11" viewBox="0 0 11 11"><path d="M.5 .5L10.500 10.500M10.500 .5L.5 10.500" stroke="#000" /></svg></button></div>
      <div class="body">
        <div class="tabs"><button class="tab t1">Система</button><button class="tab t2">Новые документы</button><button class="tab t3">Текущая деталь</button><button class="tab on t4">Текущее окно</button></div>
        <div class="page outer">
          <ul class="list"><li><span class="sel">Сетка</span></li><li><span>Перспективная проекция</span></li><li><span>Зоны</span></li></ul>
          <div>
            <div class="head">Настройка сетки</div>
            <div class="inner">
              <div class="tabs"><button class="tab on">Параметры</button><button class="tab">Отрисовка</button></div>
              <div class="page">
                <fieldset class="kinds"><legend>Тип</legend><div class="kgrid">
                  ${samples.map((s) => html`<label class="kind"><input type="radio" name="kind" aria-label=${s.label} .checked=${this.sample === s.id} @change=${() => (this.sample = s.id)} />
                    <svg viewBox="1 1 57 35" aria-hidden="true">${s.art}</svg></label>`)}
                </div></fieldset>
                <div class="steps">${this.combo("sx", "Шаг по оси \u00a0X, мм", "100.000")}${this.combo("sy", "Шаг по оси \u00a0Y, мм", "100.000")}</div>
                <fieldset class="angles">
                  ${this.combo("ra", "Угол поворота, гр", "0.000")}${this.combo("sk", "Угол искажения, гр", "90.000")}
                  <div class="pair"><button class="btn">Изо<u>м</u>етрия</button><button class="btn">Прям<u>о</u>угольная</button></div>
                </fieldset>
              </div>
            </div>
          </div>
        </div>
        <div class="foot"><button class="btn">ОК</button><button class="btn">Отмена</button><button class="btn">Справка</button></div>
      </div>
    </section>`;
  }

  render() {
    const menu = ["Файл", "Правка", "Выделить", "Вид", "Моделирование", "Оформление", "Диагностика", "Управление", "Настройка", "Приложения", "Окно", "Справка"];
    return html`
      <header class="menubar">${logo}
        <nav class="menu">${menu.map((m) => html`<a href="#">${m}</a>`)}</nav>
        <span class="frame"></span>
        <label class="find">${icon("searchL")}<input aria-label="Поиск по командам" placeholder="Поиск по командам (Alt+/)" /></label>
        <div class="winbtns">
          <button aria-label="Свернуть"><svg width="14" height="14" viewBox="0 0 14 14"><path d="M1 9H13V11H1Z" /></svg></button>
          <button aria-label="Восстановить"><svg width="14" height="14" viewBox="0 0 14 14"><path d="M3.500 4V2.500H13.500V9.500H11M.5 5.500H10.500V12.500H.5Z" fill="none" stroke="#222" /><path d="M3 1h11v2H3zM0 5h11v2H0z" /></svg></button>
          <button aria-label="Закрыть"><svg width="14" height="14" viewBox="0 0 14 14"><path d="M3 2L11 11M11 2L3 11" stroke="#222" stroke-width="2" /></svg></button>
        </div>
      </header>
      <div class="docs"><button class="plus" aria-label="Новый документ"><svg width="11" height="11" viewBox="0 0 11 11"><path d="M5.500 0V11M0 5.500H11" stroke="#222" /></svg></button>
        <button class="doc">${partIcon}Деталь БЕЗ ИМЕНИ1</button><button class="doc">${asmIcon}Сборка.a3d</button>
        <button class="doc on">${partIcon}Schwertboot.m3d<svg class="x" width="9" height="9" viewBox="0 0 14 14"><path d="M2 2L12 12M12 2L2 12" stroke="#fff" stroke-width="2" /></svg></button></div>
      <div class="ribbon">
        ${groups.map((g) => html`<div class="group ${g.size}"><div class=${classMap({ tools: true, wide: g.wide })}>${g.tools.map((x) => this.tool(x))}</div>
          <div class="cap">${g.name ? html`<span>${g.name}</span>${g.menu ? html`<svg class="tri" viewBox="0 0 8 5"><path d="M0 0H8L4 5Z" /></svg>` : nothing}${grip}` : nothing}</div></div>`)}
      </div>
      <main class="work">
        <aside class="side">
          <div class="stabs"><button class="stab">Параметры</button><button class="stab on">Дерево</button><button class="gearbtn" aria-label="Настройки панели">${icon("gear")}</button></div>
          <div class="sbar">${this.sq("treeNum", true)}${this.sq("tree")}${this.sq("asmCopy")}${this.sq("dashed")}</div>
          <div class="sfind">${this.sq("filter")}<label>${icon("searchL")}<input aria-label="Поиск в дереве" /></label></div>
          <ul class="tree">
            <li class="row live"><span class="gut"></span><span class="cell root"><span class="arr"><svg width="6" height="5" viewBox="0 0 6 5"><path d="M0 0H6L3 5Z" /></svg></span>${partIcon}Швертбот (проект) (Тел-0)</span></li>
            <li class="row"><span class="gut"></span><span class="cell sub"><span class="arr"><svg width="5" height="6" viewBox="0 0 5 6"><path d="M0 0V6L5 3Z" /></svg></span>${icon("origin")}<i class="ball"></i>Начало координат</span></li>
            ${nodes.map((n) => html`<li class=${classMap({ row: true, live: n.eye === "on" })}><span class="gut">${n.eye ? eye(n.eye) : nothing}<span class="inc">∈</span></span>
              <span class="cell">${icon(n.icon)}${n.mark ? html`<span>${n.mark}</span>` : nothing}${n.name}</span></li>`)}
          </ul>
        </aside>
        <div class="view">${scene}
          <div class="float">
            <span class="handle"><svg width="12" height="6" viewBox="0 0 12 6"><path d="M0 1H12M0 4H12" stroke="#333" stroke-width="2" stroke-dasharray="2 1" /></svg></span>
            <div class="set">${this.sq("sketchTools")}</div>
            <div class="set">${this.sq("zoomArea")}${this.sq("orient")}${this.sq("axes")}<button class="drop" aria-label="Ещё"><svg width="8" height="5" viewBox="0 0 8 5"><path d="M0 0H8L4 5Z" /></svg></button></div>
            <div class="set">${this.sq("cube", true)}${this.sq("wire")}</div>
            <div class="set">${this.sq("eyeOff")}${this.sq("camera")}</div>
            <div class="set">${this.sq("spline4", true)}${this.sq("boxes")}${this.sq("display", true)}${this.sq("triang")}</div>
            <div class="set">${this.sq("filter", true)}</div>
            <div class="set">${this.sq("caliper")}${this.sq("dropper")}</div>
          </div>
          ${this.dialog()}
        </div>
      </main>
      <footer class="task">
        <div class="sys">
          <button aria-label="Пуск"><svg width="16" height="16" viewBox="0 0 16 16" fill="#fff"><path d="M0 2.500L6.500 1.500V7.500H0ZM7.500 1.400L16 0V7.500H7.500ZM0 8.500H6.500V14.500L0 13.500ZM7.500 8.500H16V16L7.500 14.600Z" /></svg></button>
          <button aria-label="Поиск"><svg width="16" height="16" viewBox="0 0 16 16" fill="none" stroke="#fff" stroke-width="1.500"><circle cx="10.500" cy="5.500" r="4.500" /><path d="M7 9L.5 15.500" /></svg></button>
          <button aria-label="Представление задач"><svg width="20" height="14" viewBox="0 0 20 14" fill="none" stroke="#fff"><path d="M4.500 .5H15.500V13.500H4.500ZM3 2.500H.5V11.500H3M17 2.500H19.500V11.500H17" /></svg></button>
        </div>
        <div class="apps">
          <button aria-label="Edge"><svg width="20" height="22" viewBox="0 0 20 22"><path d="M0 10C1 3 5 0 10 0C17 0 20 5 20 10V12.500H6.500C6.500 16 9 17.500 12 17.500C15 17.500 17 16.500 18.500 15.500V20C16 21.500 14 22 11 22C5 22 2 18 2 14C2 10 4 7.500 8 6C5 6 2 7.500 0 10ZM6.700 9H14C14 6.500 12.500 5 10.500 5C8.500 5 7 6.500 6.700 9Z" fill="#1576cf" fill-rule="evenodd" /></svg></button>
          <button class="open" aria-label="Проводник"><svg width="22" height="19" viewBox="0 0 22 19"><path d="M1 1H9L11 3H20V7H1Z" fill="#e9c35c" /><path d="M0 6L2 4H22V18H1Z" fill="#fbe08e" /><path d="M5 19V11H18V19H14V14H9V19Z" fill="#3f9fc4" /></svg></button>
          <button aria-label="Магазин"><svg width="22" height="23" viewBox="0 0 22 23"><path d="M1 7L21 4V21L18 23L1 20Z" fill="#fff" /><path d="M5 6Q5 1 9 1T13 5M8 5Q9 1 12 1T15 4" fill="none" stroke="#fff" stroke-width="1.500" /><path d="M4 10L8 9.500V13H4ZM9 9.400L15 8.500V13H9ZM4 14H8V17.500L4 17ZM9 14H15V18.500L9 17.600Z" fill="#02030a" /></svg></button>
          <button aria-label="Почта"><svg width="24" height="19" viewBox="0 0 24 19"><path d="M0 6L12 0L24 6V19H0Z" fill="#fff" /><path d="M2 6.500H22L14 11L18 15L7 10Z" fill="#02030a" /></svg></button>
          <button class="open cur" aria-label="КОМПАС-3D">${logo}</button>
        </div>
        <div class="tray">
          <button aria-label="Скрытые значки"><svg width="14" height="8" viewBox="0 0 14 8"><path d="M1 7L7 1L13 7" fill="none" stroke="#fff" stroke-width="1.500" /></svg></button>
          <button aria-label="Громкость"><svg width="17" height="14" viewBox="0 0 17 14" fill="none" stroke="#fff"><path d="M.5 5H3L6 2V12L3 9H.5ZM8.500 5Q10 7 8.500 9M10.500 3Q13.500 7 10.500 11M13 1.500Q17.500 7 13 12.500" /></svg></button>
          <span>ENG</span>
          <time class="clock">12:26<br />23.07.2017</time>
          <button class="note" aria-label="Уведомления"><svg width="17" height="16" viewBox="0 0 17 16"><path d="M.5 .5H16.500V12.500H11L8.500 15L6 12.500H.5Z" fill="none" stroke="#fff" stroke-width="1.200" /></svg></button>
        </div><span class="edge-end"></span>
      </footer>`;
  }
}
